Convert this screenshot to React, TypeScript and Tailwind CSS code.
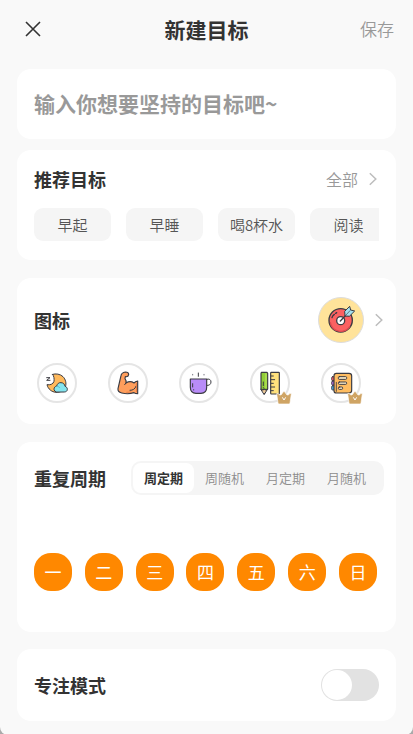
import { useState } from "react";
import type { ReactNode } from "react";

const INK = "#3b3b42";

function Chevron() {
  return (
    <svg className="h-4 w-2 shrink-0" viewBox="0 0 8 16" fill="none" stroke="#bdbdbd" strokeWidth="1.5" aria-hidden="true">
      <path d="M0.8 2.2 6.8 8 0.8 13.8" />
    </svg>
  );
}

function CloseIcon() {
  return (
    <svg className="size-4" viewBox="0 0 16 16" fill="none" stroke="#333" strokeWidth="1.6" aria-hidden="true">
      <path d="M1 1 15 15M15 1 1 15" />
    </svg>
  );
}

function TargetIcon() {
  return (
    <svg className="size-11" viewBox="57 39 132 132" fill="none" strokeLinecap="round" strokeLinejoin="round" aria-hidden="true">
      <circle cx="122" cy="106" r="35" fill="#fb6161" stroke={INK} strokeWidth="4" />
      <path d="M91 113a32 32 0 0 0 58 12" stroke="#df4b50" strokeWidth="4" />
      <path d="M96 98c1-5 4-8 7-10M107 85l3-2" stroke={INK} strokeWidth="4" />
      <circle cx="122" cy="107" r="12" fill="#fff" stroke={INK} strokeWidth="4" />
      <path d="M121 108 138 90" stroke={INK} strokeWidth="4" />
      <path d="M135 92 134 79 149 64 152 75 164 78 149 93Z" fill="#a4dfef" stroke={INK} strokeWidth="3" />
      <path d="M137 91 150 77" stroke={INK} strokeWidth="2" />
    </svg>
  );
}

function MoonIcon() {
  return (
    <svg className="size-9" viewBox="57 43 108 108" fill="none" strokeLinecap="round" strokeLinejoin="round" aria-hidden="true">
      <path d="M98 71c9-3 23-1 31 7 8 8 11 20 7 31-5 12-16 16-28 16-13-1-24-10-27-23 9 2 19-2 21-10 1-8 0-15-4-21Z" fill="#ffb95c" stroke={INK} strokeWidth="3" />
      <path d="M109 124a9 9 0 0 1-7-8c0-5 3-9 8-10 2-7 7-11 13-10 7 0 11 5 12 11 4 1 7 4 7 9 0 5-4 8-8 8Z" fill="#84e5ee" stroke={INK} strokeWidth="3" />
      <path d="M111 107c4 0 6 2 8 4" stroke="#4eb5c5" strokeWidth="2.5" />
      <path d="M80 81h10l-10 8h10" stroke={INK} strokeWidth="3" />
    </svg>
  );
}

function ArmIcon() {
  return (
    <svg className="size-9" viewBox="30 43 108 108" fill="none" strokeLinecap="round" strokeLinejoin="round" aria-hidden="true">
      <path d="M63 75c1-6 7-10 13-11 6 0 10 4 10 8-1 5-5 7-10 6l-1 6c3 4 4 8 3 13 8-5 17-5 24 0 4-4 7-5 11-6v38c-4 0-8-1-11-3-12 4-25 4-37 1-8-2-12-6-11-13Z" fill="#ff9e5c" stroke={INK} strokeWidth="3.5" />
      <path d="M78 97l-4 5M90 119c9 0 15-4 18-12" stroke={INK} strokeWidth="3" />
      <path d="M109 98l1 25M80 125l12-1" stroke="#dc7540" strokeWidth="2.5" />
    </svg>
  );
}

function CupIcon() {
  return (
    <svg className="size-9" viewBox="33 43 108 108" fill="none" strokeLinecap="round" strokeLinejoin="round" aria-hidden="true">
      <path d="M110 86c7-3 13 1 13 8 0 7-6 12-14 10" stroke={INK} strokeWidth="3" />
      <path d="M61 85h49v25c0 11-7 18-17 18H78c-10 0-17-7-17-18Z" fill="#b88cf8" stroke={INK} strokeWidth="3.5" />
      <path d="M68 99v10M71 117v1" stroke={INK} strokeWidth="3" />
      <path d="M85 67v10" stroke={INK} strokeWidth="3" />
      <path d="M68 71v2M102 71v2" stroke="#777780" strokeWidth="3" />
    </svg>
  );
}

function PencilRulerIcon() {
  return (
    <svg className="size-9" viewBox="36 43 108 108" fill="none" strokeLinecap="round" strokeLinejoin="round" aria-hidden="true">
      <path d="M63 115h20l-10 16Z" fill="#ecc796" stroke={INK} strokeWidth="3" />
      <path d="M70 127h6l-3 4Z" fill={INK} />
      <path d="M64 65h17l2 3v47l-5 3-5-3-5 3-5-3V68Z" fill="#91cd37" stroke={INK} strokeWidth="3.5" />
      <path d="M78 69v42" stroke="#c0e865" strokeWidth="3" />
      <path d="M70 94v11M70 111v1" stroke={INK} strokeWidth="3" />
      <rect x="92" y="65" width="26" height="65" rx="2" fill="#ffe17c" stroke={INK} strokeWidth="3.5" />
      <path d="M93 76h7M93 87h11M93 98h7M93 109h11M93 120h7" stroke={INK} strokeWidth="3" />
    </svg>
  );
}

function NotebookIcon() {
  return (
    <svg className="size-9" viewBox="39 43 108 108" fill="none" strokeLinecap="round" strokeLinejoin="round" aria-hidden="true">
      <rect x="65" y="78" width="10" height="12" rx="3" fill="#f05c6c" stroke={INK} strokeWidth="2.5" />
      <rect x="65" y="91" width="10" height="12" rx="3" fill="#a66bd6" stroke={INK} strokeWidth="2.5" />
      <rect x="65" y="105" width="10" height="13" rx="3" fill="#45a9e5" stroke={INK} strokeWidth="2.5" />
      <path d="M79 68h38c5 0 8 3 8 8v43c0 5-3 8-8 8H79c-5 0-7-3-7-7V75c0-4 2-7 7-7Z" fill="#ffbd61" stroke={INK} strokeWidth="3.5" />
      <path d="M79 95v27" stroke={INK} strokeWidth="2.5" />
      <rect x="85" y="78" width="25" height="8" rx="3" fill="#fff0cc" stroke={INK} strokeWidth="3" />
      <rect x="85" y="94" width="25" height="7" rx="3" fill="#fff0cc" stroke={INK} strokeWidth="3" />
      <rect x="85" y="109" width="13" height="7" rx="3" fill="#fff0cc" stroke={INK} strokeWidth="3" />
    </svg>
  );
}

function Crown() {
  return (
    <svg className="absolute -right-1 -bottom-1 h-[15px] w-4" viewBox="0 0 48 45" aria-hidden="true">
      <path d="M2 11q4-3 8 3l5 1 9-12 9 12 5-1q4-6 8-3l-4 28q0 3-3 3H9q-3 0-3-3Z" fill="#cfa464" stroke="#fff" strokeWidth="2" />
      <path d="M19 22l5 8 5-8" fill="none" stroke="#fff" strokeWidth="3" />
    </svg>
  );
}

function Card({ className, children }: { className: string; children: ReactNode }) {
  return <section className={`rounded-[14px] bg-white ${className}`}>{children}</section>;
}

function Heading({ children }: { children: ReactNode }) {
  return <h2 className="text-[18px] leading-6 font-bold">{children}</h2>;
}

const goals = ["早起", "早睡", "喝8杯水", "阅读"];
const periods = ["周定期", "周随机", "月定期", "月随机"];
const weekdays = ["一", "二", "三", "四", "五", "六", "日"];
const icons = [
  { name: "睡眠", art: <MoonIcon />, vip: false },
  { name: "健身", art: <ArmIcon />, vip: false },
  { name: "喝水", art: <CupIcon />, vip: false },
  { name: "学习", art: <PencilRulerIcon />, vip: true },
  { name: "笔记", art: <NotebookIcon />, vip: true },
];

export default function App() {
  const [goal, setGoal] = useState("");
  const [period, setPeriod] = useState("周定期");
  const [days, setDays] = useState(weekdays);
  const [focus, setFocus] = useState(false);

  const toggleDay = (day: string) =>
    setDays(days.includes(day) ? days.filter((d) => d !== day) : [...days, day]);

  return (
    <div className="min-h-screen bg-[#aaa] font-['Noto_Sans_CJK_SC',sans-serif] text-[#333]">
      <main className="flex min-h-screen flex-col rounded-b-lg bg-[#f9f9f9] px-[17px] pb-[14px]">
        <header className="mb-[11px] grid h-[58px] grid-cols-3 items-center">
          <button type="button" aria-label="关闭" className="ml-2 justify-self-start">
            <CloseIcon />
          </button>
          <h1 className="text-center text-[21px] leading-7 font-bold">新建目标</h1>
          <button type="button" className="mr-0.5 justify-self-end text-[17px] leading-6 font-[350] text-[#999]">
            保存
          </button>
        </header>

        <Card className="px-[17px] py-5">
          <input
            type="text"
            aria-label="目标名称"
            placeholder="输入你想要坚持的目标吧~"
            value={goal}
            onChange={(e) => setGoal(e.target.value)}
            className="block h-[30px] w-full bg-transparent text-[21px] font-bold outline-none placeholder:text-[#999]"
          />
        </Card>

        <Card className="mt-[11px] px-[17px] pt-[17px] pb-[19px]">
          <div className="flex items-center justify-between">
            <Heading>推荐目标</Heading>
            <button type="button" className="flex items-center gap-[11px] pr-0.5 text-[16px] leading-6 font-[350] text-[#999]">
              全部
              <Chevron />
            </button>
          </div>
          <div className="mt-[17px] flex gap-[15px] overflow-hidden">
            {goals.map((g) => (
              <button key={g} type="button" onClick={() => setGoal(g)} className="h-[33px] w-[77px] shrink-0 rounded-[9px] bg-[#f5f5f5] text-[15px] leading-5 font-[350] text-[#555]">
                {g}
              </button>
            ))}
          </div>
        </Card>

        <Card className="mt-[18px] px-[17px] pt-[19px] pb-[21px]">
          <div className="flex items-center justify-between">
            <Heading>图标</Heading>
            <button type="button" aria-label="选择图标" className="-mr-1 flex items-center gap-[11px]">
              <span className="rounded-full border border-[#ddd] bg-[#ffe39a]">
                <TargetIcon />
              </span>
              <Chevron />
            </button>
          </div>
          <div className="mt-5 flex justify-between pr-[18px] pl-[3px]">
            {icons.map((icon) => (
              <button key={icon.name} type="button" aria-label={icon.name} className="relative size-10 rounded-full border-2 border-[#e5e5e5]">
                {icon.art}
                {icon.vip && <Crown />}
              </button>
            ))}
          </div>
        </Card>

        <Card className="mt-[18px] px-[17px] pt-[19px] pb-[41px]">
          <div className="-mr-[5px] flex items-center justify-between">
            <Heading>重复周期</Heading>
            <div className="flex rounded-[10px] bg-[#f5f5f5] py-0.5 pr-[7px] pl-0.5">
              {periods.map((p) => (
                <button
                  key={p}
                  type="button"
                  aria-pressed={p === period}
                  onClick={() => setPeriod(p)}
                  className={`h-[30px] w-[61px] rounded-lg text-[13px] leading-5 ${p === period ? "bg-white font-bold" : "font-[350] text-[#8c8c8c]"}`}
                >
                  {p}
                </button>
              ))}
            </div>
          </div>
          <div className="mt-[58px] flex justify-between pr-0.5">
            {weekdays.map((day) => (
              <button
                key={day}
                type="button"
                aria-pressed={days.includes(day)}
                onClick={() => toggleDay(day)}
                className={`size-[38px] rounded-[17px] text-[17px] leading-6 ${days.includes(day) ? "bg-[#ff8800] text-white" : "bg-[#f5f5f5] text-[#666]"}`}
              >
                {day}
              </button>
            ))}
          </div>
        </Card>

        <Card className="mt-[17px] px-[17px] py-5">
          <label className="flex items-center justify-between">
            <Heading>专注模式</Heading>
            <input
              type="checkbox"
              role="switch"
              aria-label="专注模式"
              checked={focus}
              onChange={(e) => setFocus(e.target.checked)}
              className="h-8 w-[58px] appearance-none rounded-full bg-[#e2e2e2] p-px before:block before:size-[30px] before:rounded-full before:bg-white checked:bg-[#ff8800] checked:before:ml-[26px]"
            />
          </label>
        </Card>
      </main>
    </div>
  );
}
